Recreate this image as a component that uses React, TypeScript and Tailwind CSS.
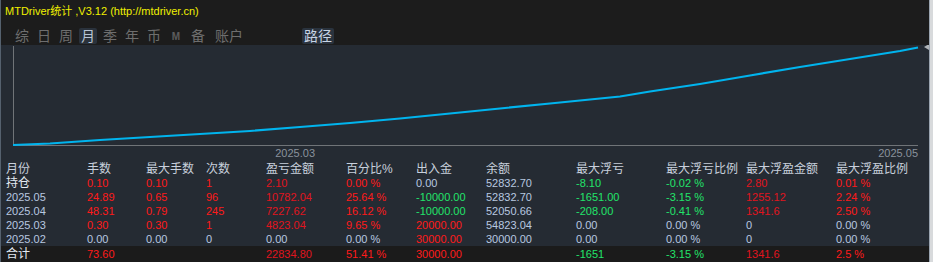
import React from "react";

const FONT = '"Liberation Sans", "Noto Sans CJK SC", sans-serif';

type Cell = { t: string; c?: string };
const R = "text-[#ff1a1a]";
const R2 = "text-[#e0141e]";
const G = "text-[#22e36a]";
const N = "text-[#b8c8e0]";

const headers = ["月份", "手数", "最大手数", "次数", "盈亏金额", "百分比%", "出入金", "余额", "最大浮亏", "最大浮亏比例", "最大浮盈金额", "最大浮盈比例"];

const rows: { label: string; lc: string; cells: Cell[] }[] = [
  {
    label: "持仓",
    lc: "text-[#e4eaf2]",
    cells: [
      { t: "0.10", c: R }, { t: "0.10", c: R }, { t: "1", c: R }, { t: "2.10", c: R2 }, { t: "0.00 %", c: R },
      { t: "0.00", c: N }, { t: "52832.70", c: N }, { t: "-8.10", c: G }, { t: "-0.02 %", c: G }, { t: "2.80", c: R2 }, { t: "0.01 %", c: R },
    ],
  },
  {
    label: "2025.05",
    lc: N,
    cells: [
      { t: "24.89", c: R }, { t: "0.65", c: R }, { t: "96", c: R }, { t: "10782.04", c: R2 }, { t: "25.64 %", c: R },
      { t: "-10000.00", c: G }, { t: "52832.70", c: N }, { t: "-1651.00", c: G }, { t: "-3.15 %", c: G }, { t: "1255.12", c: R2 }, { t: "2.24 %", c: R },
    ],
  },
  {
    label: "2025.04",
    lc: N,
    cells: [
      { t: "48.31", c: R }, { t: "0.79", c: R }, { t: "245", c: R }, { t: "7227.62", c: R2 }, { t: "16.12 %", c: R },
      { t: "-10000.00", c: G }, { t: "52050.66", c: N }, { t: "-208.00", c: G }, { t: "-0.41 %", c: G }, { t: "1341.6", c: R2 }, { t: "2.50 %", c: R },
    ],
  },
  {
    label: "2025.03",
    lc: N,
    cells: [
      { t: "0.30", c: R }, { t: "0.30", c: R }, { t: "1", c: R }, { t: "4823.04", c: R2 }, { t: "9.65 %", c: R },
      { t: "20000.00", c: R }, { t: "54823.04", c: N }, { t: "0.00", c: N }, { t: "0.00 %", c: N }, { t: "0", c: N }, { t: "0.00 %", c: N },
    ],
  },
  {
    label: "2025.02",
    lc: N,
    cells: [
      { t: "0.00", c: N }, { t: "0.00", c: N }, { t: "0", c: N }, { t: "0.00", c: N }, { t: "0.00 %", c: N },
      { t: "30000.00", c: R }, { t: "30000.00", c: N }, { t: "0.00", c: N }, { t: "0.00 %", c: N }, { t: "0", c: N }, { t: "0.00 %", c: N },
    ],
  },
];

const total: Cell[] = [
  { t: "73.60", c: R }, { t: "" }, { t: "" }, { t: "22834.80", c: R2 }, { t: "51.41 %", c: R },
  { t: "30000.00", c: R }, { t: "" }, { t: "-1651", c: G }, { t: "-3.15 %", c: G }, { t: "1341.6", c: R2 }, { t: "2.5 %", c: R },
];

const GRID = "grid grid-cols-[81px_59px_60px_60px_80px_70px_70px_90px_90px_80px_90px_1fr] pl-[5px]";

const tabs = ["综", "日", "周", "月", "季", "年", "币", "M", "备"];

const pts: [number, number][] = [
  [13, 145], [50, 143.5], [100, 140], [150, 137], [200, 134], [250, 131], [300, 127], [350, 123],
  [400, 118.5], [450, 113.5], [500, 108.5], [550, 103.5], [600, 98.5], [620, 96.5], [650, 91.5],
  [700, 84], [750, 75.5], [800, 67], [850, 59], [900, 51], [918, 47.5],
];

export default function App() {
  return (
    <div className="w-[933px] h-[262px] bg-[#d8dadc] flex" style={{ fontFamily: FONT }}>
      <div className="w-[930px] h-full flex flex-col bg-[#252b33] border-l border-l-[#55616e] border-r border-r-[#9aa4b0] relative">
        {/* top bar */}
        <div className="h-[45px] bg-[#1c1c1c] flex flex-col">
          <div className="h-[22px] pl-[4px] flex items-center text-[11px] leading-none text-[#f0f000]">
            MTDriver统计 ,V3.12 (http://mtdriver.cn)
          </div>
          <div className="h-[23px] flex items-start pt-[6px] pl-[12px] gap-[4px]">
            {tabs.map((t) => (
              <div
                key={t}
                className={
                  "w-[18px] h-[16px] flex items-center justify-center rounded-[2px] " +
                  (t === "月" ? "bg-[#2a323c] text-[#b8c4d4] text-[14px]" : t === "M" ? "text-[#5c5c5c] text-[10px] font-bold" : "text-[#6e6e6e] text-[14px]")
                }
              >
                {t}
              </div>
            ))}
            <div className="w-[36px] h-[16px] flex items-center justify-center text-[14px] text-[#6e6e6e]">账户</div>
            <div className="ml-[51px] w-[32px] h-[16px] flex items-center justify-center rounded-[2px] bg-[#2a333e] text-[14px] text-[#c8d4e4]">
              路径
            </div>
          </div>
        </div>

        {/* chart */}
        <div className="h-[117px]">
          <svg width="928" height="117" viewBox="1 45 928 117" className="block">
            <line x1="13.5" y1="46" x2="13.5" y2="145" stroke="#707478" strokeWidth="1" />
            <line x1="13" y1="145.5" x2="918" y2="145.5" stroke="#707478" strokeWidth="1" />
            <polyline
              points={pts.map((p) => p.join(",")).join(" ")}
              fill="none"
              stroke="#00b4ee"
              strokeWidth="2.2"
              strokeLinejoin="round"
            />
            <text x="315" y="157" textAnchor="end" fontSize="11" fill="#8a929c" fontFamily={FONT}>2025.03</text>
            <text x="918" y="157" textAnchor="end" fontSize="11" fill="#8a929c" fontFamily={FONT}>2025.05</text>
            <polygon points="924,47 929,44 929,50" fill="#b0b4b8" />
          </svg>
        </div>

        {/* table */}
        <div className="flex-1 flex flex-col">
          <div className={GRID + " h-[14px] leading-[14px] text-[12px] text-[#c8d0dc]"}>
            {headers.map((h) => (
              <div key={h} className="whitespace-nowrap">{h}</div>
            ))}
          </div>
          {rows.map((r) => (
            <div key={r.label} className={GRID + " h-[14px] leading-[14px] text-[11px]"}>
              <div className={r.lc + (r.label === "持仓" ? " text-[12px]" : "")}>{r.label}</div>
              {r.cells.map((c, i) => (
                <div key={i} className={"whitespace-nowrap " + (c.c ?? "")}>{c.t}</div>
              ))}
            </div>
          ))}
          <div className={GRID + " flex-1 bg-[#1b1b1b] pt-[1px] leading-[14px] text-[11px]"}>
            <div className="text-[12px] text-[#e4eaf2]">合计</div>
            {total.map((c, i) => (
              <div key={i} className={"whitespace-nowrap " + (c.c ?? "")}>{c.t}</div>
            ))}
          </div>
        </div>
      </div>
    </div>
  );
}
